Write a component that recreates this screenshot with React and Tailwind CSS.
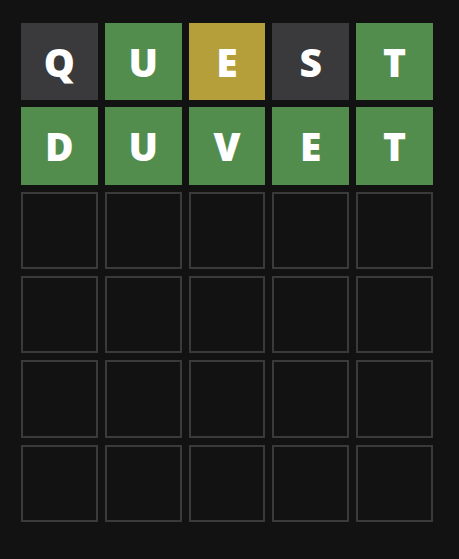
const rows = [
  [["Q", "gray"], ["U", "green"], ["E", "yellow"], ["S", "gray"], ["T", "green"]],
  [["D", "green"], ["U", "green"], ["V", "green"], ["E", "green"], ["T", "green"]],
  null, null, null, null,
];

const colorClass = {
  gray: "bg-[#3a3a3c]",
  green: "bg-[#538d4e]",
  yellow: "bg-[#b59f3b]",
};

export default function App() {
  return (
    <div className="w-[459px] h-[559px] bg-[#121213] pt-[23px] pl-[21px]">
      <div className="grid grid-cols-5 grid-rows-6 gap-x-[7px] gap-y-[7px] w-[412px] h-[499px]">
        {rows.flatMap((row, r) =>
          Array.from({ length: 5 }, (_, c) => {
            const cell = row ? row[c] : null;
            if (!cell) {
              return (
                <div
                  key={`${r}-${c}`}
                  className="border-2 border-[#3a3a3c] bg-[#121213]"
                />
              );
            }
            return (
              <div
                key={`${r}-${c}`}
                className={`${colorClass[cell[1]]} flex items-center justify-center text-white font-extrabold text-[39px] leading-none font-['Open_Sans',sans-serif]`}
              >
                {cell[0]}
              </div>
            );
          })
        )}
      </div>
    </div>
  );
}
